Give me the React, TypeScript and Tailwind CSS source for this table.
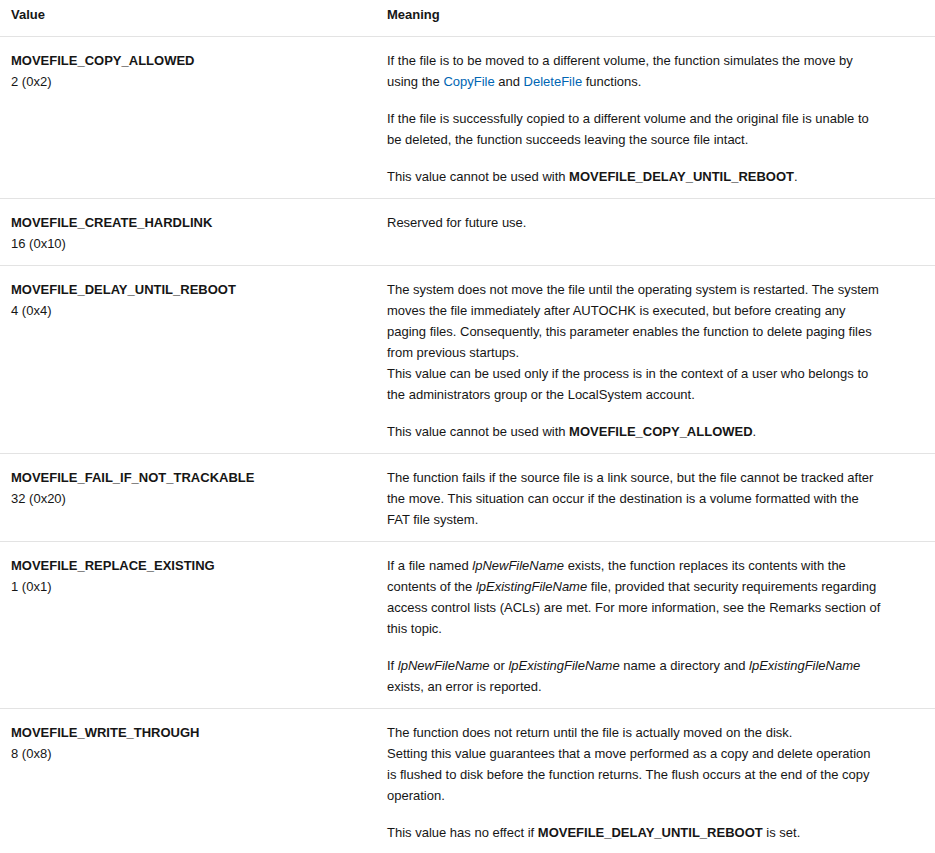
import type { ReactNode } from "react";

const Link = ({ children }: { children: ReactNode }) => (
  <a href="#" className="text-[#0065b3] hover:underline">{children}</a>
);

const B = ({ children }: { children: ReactNode }) => <strong className="font-bold">{children}</strong>;
const I = ({ children }: { children: ReactNode }) => <em className="italic">{children}</em>;

type Row = { name: string; value: string; meaning: ReactNode };

const rows: Row[] = [
  {
    name: "MOVEFILE_COPY_ALLOWED",
    value: "2 (0x2)",
    meaning: (
      <>
        <p>
          If the file is to be moved to a different volume, the function simulates the move by
          <br />
          using the <Link>CopyFile</Link> and <Link>DeleteFile</Link> functions.
        </p>
        <p>
          If the file is successfully copied to a different volume and the original file is unable to
          <br />
          be deleted, the function succeeds leaving the source file intact.
        </p>
        <p>
          This value cannot be used with <B>MOVEFILE_DELAY_UNTIL_REBOOT</B>.
        </p>
      </>
    ),
  },
  {
    name: "MOVEFILE_CREATE_HARDLINK",
    value: "16 (0x10)",
    meaning: <p>Reserved for future use.</p>,
  },
  {
    name: "MOVEFILE_DELAY_UNTIL_REBOOT",
    value: "4 (0x4)",
    meaning: (
      <>
        <p>
          The system does not move the file until the operating system is restarted. The system
          <br />
          moves the file immediately after AUTOCHK is executed, but before creating any
          <br />
          paging files. Consequently, this parameter enables the function to delete paging files
          <br />
          from previous startups.
          <br />
          This value can be used only if the process is in the context of a user who belongs to
          <br />
          the administrators group or the LocalSystem account.
        </p>
        <p>
          This value cannot be used with <B>MOVEFILE_COPY_ALLOWED</B>.
        </p>
      </>
    ),
  },
  {
    name: "MOVEFILE_FAIL_IF_NOT_TRACKABLE",
    value: "32 (0x20)",
    meaning: (
      <p>
        The function fails if the source file is a link source, but the file cannot be tracked after
        <br />
        the move. This situation can occur if the destination is a volume formatted with the
        <br />
        FAT file system.
      </p>
    ),
  },
  {
    name: "MOVEFILE_REPLACE_EXISTING",
    value: "1 (0x1)",
    meaning: (
      <>
        <p>
          If a file named <I>lpNewFileName</I> exists, the function replaces its contents with the
          <br />
          contents of the <I>lpExistingFileName</I> file, provided that security requirements regarding
          <br />
          access control lists (ACLs) are met. For more information, see the Remarks section of
          <br />
          this topic.
        </p>
        <p>
          If <I>lpNewFileName</I> or <I>lpExistingFileName</I> name a directory and <I>lpExistingFileName</I>
          <br />
          exists, an error is reported.
        </p>
      </>
    ),
  },
  {
    name: "MOVEFILE_WRITE_THROUGH",
    value: "8 (0x8)",
    meaning: (
      <>
        <p>
          The function does not return until the file is actually moved on the disk.
          <br />
          Setting this value guarantees that a move performed as a copy and delete operation
          <br />
          is flushed to disk before the function returns. The flush occurs at the end of the copy
          <br />
          operation.
        </p>
        <p>
          This value has no effect if <B>MOVEFILE_DELAY_UNTIL_REBOOT</B> is set.
        </p>
      </>
    ),
  },
];

export default function App() {
  return (
    <div className="w-[935px] bg-white text-[#161616] text-[13px] leading-[21px] font-['Liberation_Sans',Arial,sans-serif]">
      <table className="w-full table-fixed border-collapse text-left">
        <colgroup>
          <col className="w-[376px]" />
          <col />
        </colgroup>
        <thead>
          <tr>
            <th className="pl-[11px] pr-[10px] pt-[4px] pb-[11px] font-bold align-top">Value</th>
            <th className="pl-[11px] pr-[10px] pt-[4px] pb-[11px] font-bold align-top">Meaning</th>
          </tr>
        </thead>
        <tbody>
          {rows.map((r) => (
            <tr key={r.name} className="border-t border-[#e3e3e3]">
              <td className="pl-[11px] pr-[10px] pt-[13px] pb-[11px] align-top">
                <div className="font-bold">{r.name}</div>
                <div>{r.value}</div>
              </td>
              <td className="pl-[11px] pr-[10px] pt-[13px] pb-[11px] align-top whitespace-nowrap">
                <div className="space-y-4">{r.meaning}</div>
              </td>
            </tr>
          ))}
        </tbody>
      </table>
    </div>
  );
}
